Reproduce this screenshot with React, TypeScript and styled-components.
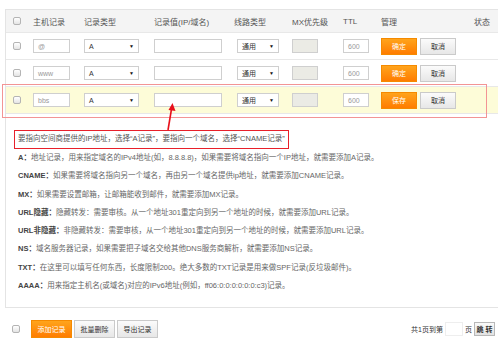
import React from 'react'
import styled, { createGlobalStyle, css } from 'styled-components'

const GlobalStyle = createGlobalStyle`
  html, body {
    margin: 0;
    padding: 0;
    background: #fff;
  }
  body {
    font-family: "Liberation Sans", "Noto Sans CJK SC", sans-serif;
    color: #555;
  }
`

const Page = styled.div`
  position: relative;
  width: 500px;
  height: 347px;
  overflow: hidden;
  padding-top: 9px;
  box-sizing: border-box;
`

const Panel = styled.div`
  margin-left: 5px;
  width: 493px;
  border: 1px solid #e4e4e4;
  border-right: none;
  box-sizing: border-box;
`

const cols = '22px 51px 70px 80px 58px 51px 38px 93px 1fr'

const HeadRow = styled.div`
  display: grid;
  grid-template-columns: ${cols};
  height: 22px;
  align-items: center;
  background: #f4f4f4;
  font-size: 8px;
  color: #555;
`

const Row = styled.div<{ $active?: boolean }>`
  display: grid;
  grid-template-columns: ${cols};
  height: 27px;
  align-items: center;
  border-top: 1px solid #e8e8e8;
  box-sizing: border-box;
  background: ${p => (p.$active ? '#fdfcd8' : '#fff')};
`

const Cell = styled.div<{ $pl?: number }>`
  display: flex;
  align-items: center;
  gap: 3px;
  padding-left: ${p => p.$pl ?? 5}px;
  white-space: nowrap;
`

const Check = styled.span`
  display: inline-block;
  width: 6px;
  height: 6px;
  border: 1px solid #b4b4b4;
  border-radius: 2px;
  background: linear-gradient(#fff, #e4e4e4);
`

const fieldBase = css`
  height: 14px;
  box-sizing: border-box;
  border: 1px solid #cfcfcf;
  font-size: 7px;
  display: flex;
  align-items: center;
  padding: 0 4px;
`

const Field = styled.div<{ $w: number; $disabled?: boolean }>`
  ${fieldBase};
  width: ${p => p.$w}px;
  color: #999;
  background: ${p => (p.$disabled ? '#ebebe5' : '#fff')};
`

const Select = styled.div<{ $w: number; $ml?: number }>`
  ${fieldBase};
  width: ${p => p.$w}px;
  margin-left: ${p => p.$ml ?? 0}px;
  color: #333;
  background: #fff;
  justify-content: space-between;
  &::after {
    content: '▼';
    font-size: 5px;
    color: #111;
  }
`

const Btn = styled.div<{ $primary?: boolean; $w?: number; $h?: number }>`
  display: flex;
  align-items: center;
  justify-content: center;
  width: ${p => p.$w ?? 36}px;
  height: ${p => p.$h ?? 17}px;
  box-sizing: border-box;
  font-size: 7px;
  ${p =>
    p.$primary
      ? css`
          background: linear-gradient(#ffa41c, #ff7c00);
          border: 1px solid #f58a00;
          color: #fff;
        `
      : css`
          background: linear-gradient(#fbfbfb, #e7e7e7);
          border: 1px solid #cacaca;
          color: #333;
        `}
`

const Desc = styled.div`
  padding: 16px 0 12px 8px;
  border-top: 1px solid #e8e8e8;
  font-size: 7.5px;
  color: #666;
`

const Tip = styled.div`
  display: inline-block;
  border: 1.5px solid #e8202a;
  padding: 0 3px;
  height: 19px;
  line-height: 16px;
  box-sizing: border-box;
  color: #555;
`

const Line = styled.div`
  line-height: 18.3px;
  padding-left: 4px;
  white-space: nowrap;
  b {
    color: #444;
  }
`

const Footer = styled.div`
  display: flex;
  align-items: center;
  justify-content: space-between;
  margin-top: 12px;
  padding: 0 5px 0 12px;
`

const Group = styled.div<{ $gap: number }>`
  display: flex;
  align-items: center;
  gap: ${p => p.$gap}px;
`

const PagerText = styled.span`
  font-size: 7px;
  color: #333;
`

const PageInput = styled.div`
  width: 16px;
  height: 12px;
  border: 1px solid #eee;
`

const JumpBtn = styled.div`
  height: 14px;
  width: 21px;
  display: flex;
  align-items: center;
  justify-content: center;
  font-size: 7px;
  font-weight: bold;
  color: #333;
  border: 1px solid #b8b8b8;
  background: linear-gradient(#fafafa, #e2e2e2);
  box-sizing: border-box;
`

const Highlight = styled.div`
  position: absolute;
  left: 2px;
  top: 84px;
  width: 485px;
  height: 34px;
  border: 1px solid #f39494;
  box-sizing: border-box;
  pointer-events: none;
`

const Arrow = styled.svg`
  position: absolute;
  left: 162px;
  top: 102px;
`

type Rec = { host: string; btn: string; active?: boolean }

const records: Rec[] = [
  { host: '@', btn: '确定' },
  { host: 'www', btn: '确定' },
  { host: 'bbs', btn: '保存', active: true },
]

const lines: [string, string][] = [
  ['A：', '地址记录，用来指定域名的IPv4地址(如，8.8.8.8)，如果需要将域名指向一个IP地址，就需要添加A记录。'],
  ['CNAME：', '如果需要将域名指向另一个域名，再由另一个域名提供ip地址，就需要添加CNAME记录。'],
  ['MX：', '如果需要设置邮箱，让邮箱能收到邮件，就需要添加MX记录。'],
  ['URL隐藏：', '隐藏转发：需要审核。从一个地址301重定向到另一个地址的时候，就需要添加URL记录。'],
  ['URL非隐藏：', '非隐藏转发：需要审核，从一个地址301重定向到另一个地址的时候，就需要添加URL记录。'],
  ['NS：', '域名服务器记录，如果需要把子域名交给其他DNS服务商解析，就需要添加NS记录。'],
  ['TXT：', '在这里可以填写任何东西，长度限制200。绝大多数的TXT记录是用来做SPF记录(反垃圾邮件)。'],
  ['AAAA：', '用来指定主机名(或域名)对应的IPv6地址(例如，ff06:0:0:0:0:0:0:c3)记录。'],
]

export default function App() {
  return (
    <Page>
      <GlobalStyle />
      <Panel>
        <HeadRow>
          <Cell $pl={7}><Check /></Cell>
          <Cell>主机记录</Cell>
          <Cell>记录类型</Cell>
          <Cell>记录值(IP/域名)</Cell>
          <Cell>线路类型</Cell>
          <Cell>MX优先级</Cell>
          <Cell>TTL</Cell>
          <Cell>管理</Cell>
          <Cell>状态</Cell>
        </HeadRow>
        {records.map(r => (
          <Row key={r.host} $active={r.active}>
            <Cell $pl={7}><Check /></Cell>
            <Cell><Field $w={37}>{r.host}</Field></Cell>
            <Cell><Select $w={55}>A</Select></Cell>
            <Cell><Field $w={68} /></Cell>
            <Cell><Select $w={42} $ml={3}>通用</Select></Cell>
            <Cell><Field $w={26} $disabled /></Cell>
            <Cell><Field $w={26}>600</Field></Cell>
            <Cell>
              <Btn $primary>{r.btn}</Btn>
              <Btn>取消</Btn>
            </Cell>
            <Cell />
          </Row>
        ))}
        <Desc>
          <Tip>要指向空间商提供的IP地址，选择“A记录”，要指向一个域名，选择“CNAME记录”</Tip>
          {lines.map(([k, v]) => (
            <Line key={k}>
              <b>{k}</b>
              {v}
            </Line>
          ))}
        </Desc>
      </Panel>
      <Footer>
        <Group $gap={11}>
          <Check />
          <Group $gap={2}>
            <Btn $primary $w={41} $h={18}>添加记录</Btn>
            <Btn $w={41} $h={18}>批量删除</Btn>
            <Btn $w={41} $h={18}>导出记录</Btn>
          </Group>
        </Group>
        <Group $gap={2}>
          <PagerText>共1页到第</PagerText>
          <PageInput />
          <PagerText>页</PagerText>
          <JumpBtn>跳 转</JumpBtn>
        </Group>
      </Footer>
      <Highlight />
      <Arrow width="20" height="30" viewBox="0 0 20 30">
        <path d="M6 28 L9.5 7" stroke="#e8101a" strokeWidth="1.6" fill="none" />
        <path d="M10.5 1 L13.5 9 L6.5 8 Z" fill="#e8101a" />
      </Arrow>
    </Page>
  )
}
